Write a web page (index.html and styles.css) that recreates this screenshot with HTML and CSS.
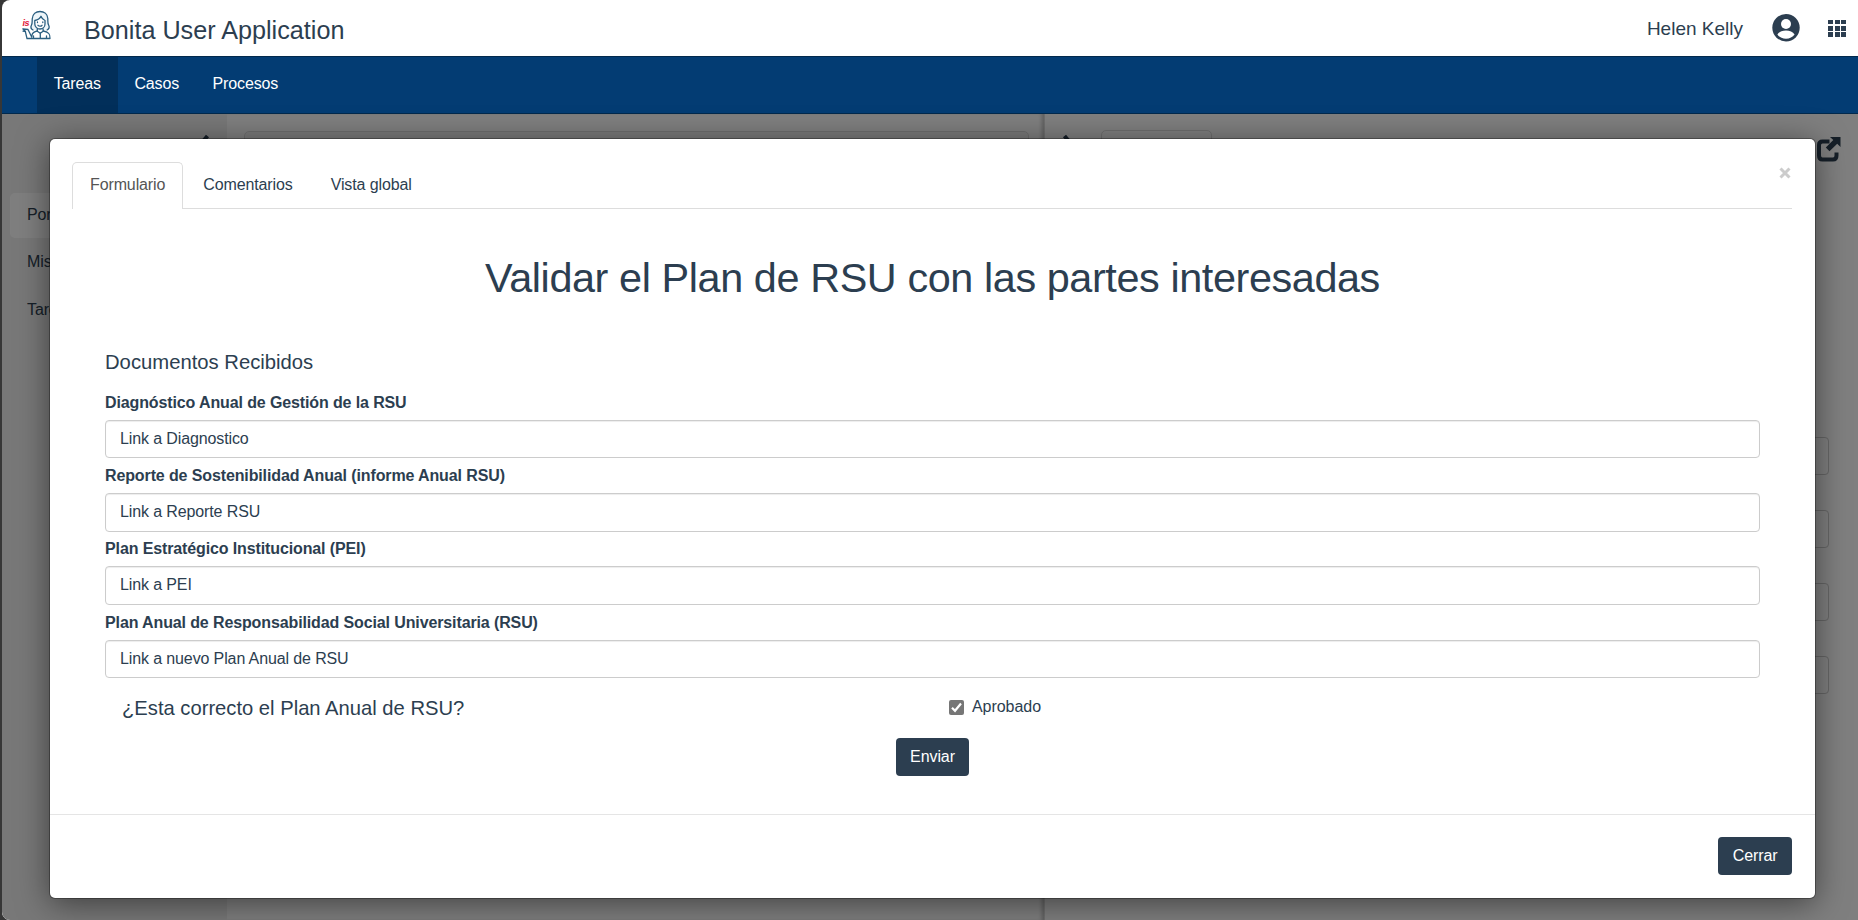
FILE: index.html
```html
<!DOCTYPE html>
<html lang="es">
<head>
<meta charset="utf-8">
<title>Bonita User Application</title>
<link rel="stylesheet" href="styles.css">
</head>
<body>
<div class="app">
  <header class="topbar">
    <svg class="logo" viewBox="0 0 30 30" width="30" height="30">
      <text class="logo-mark" x="0.500" y="16">is</text>
      <g fill="none" stroke="#2b5f80" stroke-width="1.3" stroke-linecap="round" stroke-linejoin="round">
        <path fill="#edf5f9" d="M11 20c-2-1-2.500-3-1.500-5C10.500 13.500 10 11 10.300 8.500 10.700 4 14 1.500 18 1.500S25.500 4 25.800 8.500c.2 3-.3 4.500.8 6.500 1 2 .4 4-1.500 5"/>
        <path fill="#fff" d="M12.800 10.500c2.700-.5 5.200-2 6.200-4.200.7 2 2 3.500 4 4.200v3.500c0 3-2.400 5-5 5s-5.200-2-5.200-5z"/>
        <path d="M15.500 12v.6M20.800 12v.6M16 15.300c1 1.200 3.200 1.200 4 0M15.300 19v2.200l3 2 2.800-2V19"/>
        <path d="M15.300 21c-3 .6-4.800 1.200-5.300 4l-.3 2L6 19.500 .8 18.800l2.500 2.500L5 28.500h23c.2-3.700-.5-6.500-6.600-7.500M18.300 23.200v5.300M11.500 25.800v2.700M24.500 25.800v2.700M1 21.200l2.500.5"/>
      </g>
    </svg>
    <h1 class="app-name">Bonita User Application</h1>
    <span class="user-name">Helen Kelly</span>
    <svg class="user-icon" viewBox="0 0 28 28" width="28" height="28">
      <circle cx="14" cy="13.700" r="13.700" fill="#2c3e50"/>
      <circle cx="14" cy="10" r="5" fill="#fff"/>
      <path fill="#fff" d="M5.400 20.500c1.600-2.700 5-3.900 8.600-3.900s7 1.200 8.600 3.900c-1.900 2.700-5 4.200-8.600 4.200s-6.700-1.500-8.600-4.200z"/>
    </svg>
    <svg class="grid-icon" viewBox="0 0 18 17" width="18" height="17" fill="#2c3e50" shape-rendering="crispEdges">
      <path d="M0 0h5v4H0zM7 0h5v4H7zM13 0h5v4h-5zM0 6h5v5H0zM7 6h5v5H7zM13 6h5v5h-5zM0 12h5v5H0zM7 12h5v5H7zM13 12h5v5h-5z"/>
    </svg>
  </header>
  <nav class="nav">
    <a class="nav-item active">Tareas</a>
    <a class="nav-item">Casos</a>
    <a class="nav-item">Procesos</a>
  </nav>
  <main class="workspace">
    <aside class="sidebar">
      <svg class="chevron" viewBox="0 0 16 24" width="16" height="24"><path d="M12.500 2 4 12l8.500 10"/></svg>
      <a class="filter selected">Por hacer</a>
      <a class="filter">Mis tareas</a>
      <a class="filter">Tareas hechas</a>
    </aside>
    <section class="list"><div class="list-head"></div></section>
    <section class="details">
      <div class="details-bar">
        <svg class="chevron" viewBox="0 0 16 24" width="16" height="24"><path d="M3.500 2 12 12 3.500 22"/></svg>
        <div class="details-tab"></div>
        <svg class="open-icon" viewBox="0 0 25 25" width="25" height="25">
          <path fill="none" stroke="#2c3e50" stroke-width="4" d="M13.500 4.500H6.500Q3 4.500 3 8v10.500Q3 22.500 6.500 22.500h10.500Q20.500 22.500 20.500 18.500V15.500"/>
          <path fill="#2c3e50" d="M14 0h10.500v10l-3.300-3.200-7.700 7.400-3.700-3.700 7.500-7.400z"/>
        </svg>
      </div>
      <div class="details-form">
        <div class="ghost"></div><div class="ghost"></div><div class="ghost"></div><div class="ghost"></div>
      </div>
    </section>
    <div class="backdrop"></div>
  </main>
</div>

<div class="modal">
  <div class="tabs">
    <a class="tab current">Formulario</a>
    <a class="tab">Comentarios</a>
    <a class="tab">Vista global</a>
    <svg class="close" viewBox="0 0 12 12" width="12" height="12"><path d="M1.500 1.500l9 9M10.500 1.500l-9 9"/></svg>
  </div>
  <div class="form">
    <h2 class="title">Validar el Plan de RSU con las partes interesadas</h2>
    <h3 class="subtitle">Documentos Recibidos</h3>
    <div class="field"><label class="label">Diagnóstico Anual de Gestión de la RSU</label><div class="input">Link a Diagnostico</div></div>
    <div class="field"><label class="label">Reporte de Sostenibilidad Anual (informe Anual RSU)</label><div class="input">Link a Reporte RSU</div></div>
    <div class="field"><label class="label">Plan Estratégico Institucional (PEI)</label><div class="input">Link a PEI</div></div>
    <div class="field"><label class="label">Plan Anual de Responsabilidad Social Universitaria (RSU)</label><div class="input">Link a nuevo Plan Anual de RSU</div></div>
    <div class="approval">
      <span class="question">¿Esta correcto el Plan Anual de RSU?</span>
      <label class="check">
        <svg viewBox="0 0 15 15" width="15" height="15"><rect width="15" height="15" rx="2" fill="#767676"/><path d="M3 7.800l3 3 6-7.300" fill="none" stroke="#fff" stroke-width="2.200"/></svg>
        <span>Aprobado</span>
      </label>
    </div>
    <button class="btn send">Enviar</button>
  </div>
  <div class="footer"><button class="btn">Cerrar</button></div>
</div>
</body>
</html>
```
FILE: styles.css
```css
* { box-sizing: border-box; }
body {
  margin: 0;
  height: 920px;
  overflow: hidden;
  background: #373737;
  color: #2c3e50;
  font: 16px/22px "Liberation Sans", Arial, sans-serif;
  letter-spacing: -.12px;
}
h1, h2, h3 { margin: 0; font-weight: 400; letter-spacing: 0; }
svg { display: block; flex: none; }

.app {
  display: flex;
  flex-direction: column;
  height: 920px;
  margin-left: 2px;
  overflow: hidden;
  border-radius: 8px 0 0 8px;
  background: #fff;
}
.topbar { display: flex; flex: none; height: 56px; padding: 0 12px 0 20px; }
.logo { margin-top: 10px; }
.logo-mark { fill: #e0203c; font: italic bold 9px "Liberation Sans", sans-serif; letter-spacing: -.5px; }
.app-name { margin: 15px auto 0 32px; font-size: 25.2px; line-height: 31px; }
.user-name { margin-top: 17px; font-size: 19px; line-height: 24px; letter-spacing: 0; }
.user-icon { margin: 14px 0 0 29px; }
.grid-icon { margin: 20px 0 0 28px; }

.nav {
  display: flex;
  flex: none;
  height: 58px;
  padding-left: 35px;
  border-top: 1px solid #02294c;
  border-bottom: 1px solid #02294c;
  background: #033c73;
}
.nav-item { padding: 16px 16.700px; color: #fff; }
.active { background: #022f5a; }

.workspace { position: relative; display: flex; flex: 1; }
.backdrop { position: absolute; inset: 0; background: rgba(0, 0, 0, .5); }
.sidebar { width: 225px; padding: 18px 8px; background: #f0f0f0; }
.chevron { fill: none; stroke: #2c3e50; stroke-width: 4; }
.sidebar .chevron { margin: 2px 0 35px 185px; }
.filter { display: block; height: 45px; margin-bottom: 2.4px; padding: 11px 17px; border-radius: 5px; }
.selected { background: #fff; }
.list { width: 818px; padding: 17px 15px 0 17px; border-right: 1px solid #ddd; box-shadow: inset -4px 0 4px -2px #bbb; }
.list-head { height: 60px; border: 1px solid #ddd; border-radius: 5px; background: #f5f5f5; }
.details { flex: 1; }
.details-bar { display: flex; height: 323px; padding: 16px 17px 0 16px; }
.details-bar .chevron { margin-top: 4px; }
.details-tab { width: 111px; height: 46px; margin: 0 auto 0 24px; border: 1px solid #ddd; border-radius: 5px 5px 0 0; }
.open-icon { margin-top: 7px; }
.details-form { display: grid; gap: 35px; padding: 0 29px 0 60px; }
.ghost { height: 38px; border: 1px solid #ccc; border-radius: 4px; }

.modal {
  position: absolute;
  top: 139px;
  left: 50px;
  display: flex;
  flex-direction: column;
  width: 1765px;
  height: 759px;
  border-radius: 5px;
  background: #fff;
  box-shadow: 0 0 0 1px rgba(0, 0, 0, .3), 0 5px 32px rgba(0, 0, 0, .5);
}
.tabs { display: flex; height: 47px; margin: 23px 23px 0 22px; border-bottom: 1px solid #ddd; }
.tab { padding: 11px 17px; margin-right: 2px; border: 1px solid transparent; }
.current { height: 47px; margin-bottom: -1px; color: #555; border-color: #ddd; border-bottom: 0; border-radius: 5px 5px 0 0; background: #fff; }
.close { margin: 5px 1px 0 auto; fill: none; stroke: #ccc; stroke-width: 3; }

.form { display: flex; flex: 1; flex-direction: column; padding: 46px 55px 0; }
.title { font-size: 41.4px; line-height: 46px; letter-spacing: -.41px; text-align: center; }
.subtitle { margin: 50px 0 19px; font-size: 20.25px; line-height: 22px; }
.field { height: 73.2px; }
.label { display: block; margin-bottom: 6px; font-weight: 700; }
.input {
  height: 38.400px;
  padding: 7px 14px;
  border: 1px solid #ccc;
  border-radius: 4px;
  box-shadow: inset 0 1px 1px rgba(0, 0, 0, .075);
}
.approval { display: grid; grid-template-columns: 1fr 1fr; height: 53.4px; padding: 12px 0 0 17px; }
.question { font-size: 20.2px; letter-spacing: 0; }
.check { display: flex; gap: 8px; padding-left: 8px; margin-top: -1px; letter-spacing: -.05px; }
.check svg { margin-top: 4px; }
.btn { height: 38px; padding: 0 14.500px; border: 0; border-radius: 4px; background: #2c3e50; color: #fff; font: inherit; line-height: 36px; letter-spacing: -.1px; }
.send { align-self: center; }
.footer { display: flex; flex: none; justify-content: flex-end; height: 84px; padding: 22px 23px 0; border-top: 1px solid #e5e5e5; }
```
